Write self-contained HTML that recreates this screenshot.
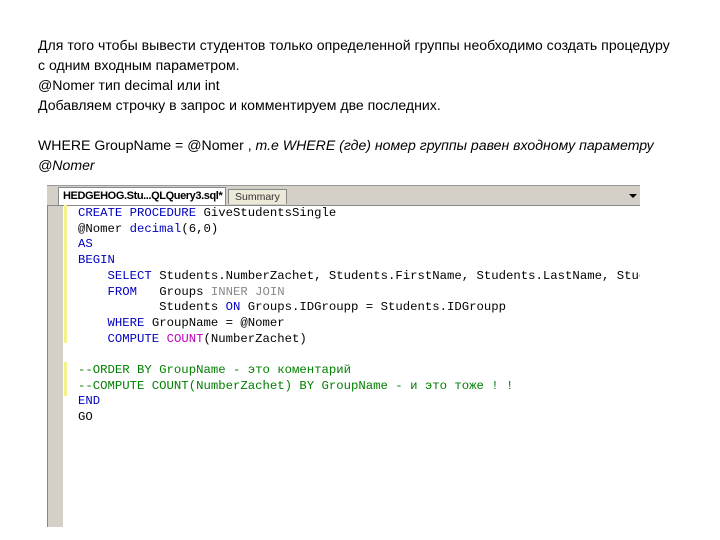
<!DOCTYPE html>
<html><head><meta charset="utf-8"><style>
body{margin:0;width:720px;height:540px;background:#fff;position:relative;overflow:hidden;font-family:"Liberation Sans",sans-serif}
.t{position:absolute;left:38px;font-size:14.1px;color:#000;white-space:nowrap;line-height:16px}
.frame{position:absolute;left:47px;top:185px;width:593px;height:342px;background:#fff}
.gray{position:absolute;left:47px;top:185px;width:15px;height:342px;background:#d4d0c8;border-left:1px solid #888}
.yel{position:absolute;left:64px;top:205px;width:3px;height:138px;background:#f4f28a}
.yel2{position:absolute;left:64px;top:362px;width:3px;height:34px;background:#f4f28a}
.tabbar{position:absolute;left:47px;top:185px;width:593px;height:19px;background:#d4d0c8;border-top:1px solid #999;border-bottom:1px solid #888}
.tab1{position:absolute;left:58px;top:187px;width:158px;height:17px;padding:0 4px;background:#fff;font-size:11px;letter-spacing:-0.4px;font-weight:bold;line-height:17px;border:1px solid #888;border-bottom:none;white-space:nowrap;overflow:hidden}
.tab2{position:absolute;left:228px;top:189px;height:14px;padding:0 6px;background:#ece9d8;font-size:10.5px;line-height:14px;border:1px solid #888;border-bottom:none;color:#333}
.arr{position:absolute;left:629px;top:194px;width:0;height:0;border-left:4px solid transparent;border-right:4px solid transparent;border-top:4px solid #000}
.code{position:absolute;left:78px;top:206px;font-family:"Liberation Mono",monospace;font-size:12.3px;line-height:15.7px;white-space:pre;color:#000;width:562px;overflow:hidden}
.k{color:#0000c0}.p{color:#c000c0}.g{color:#888}.c{color:#008000}
</style></head><body>
<div class="t" style="top:37px">Для того чтобы вывести студентов только определенной группы необходимо создать процедуру</div>
<div class="t" style="top:57px">с одним входным параметром.</div>
<div class="t" style="top:77px">@Nomer тип decimal или int</div>
<div class="t" style="top:97px">Добавляем строчку в запрос и комментируем две последних.</div>
<div class="t" style="top:137px">WHERE GroupName = @Nomer , <i>т.е WHERE (где) номер группы равен входному параметру</i></div>
<div class="t" style="top:157px"><i>@Nomer</i></div>
<div class="frame"></div>
<div class="gray"></div>
<div class="tabbar"></div>
<div class="tab1">HEDGEHOG.Stu...QLQuery3.sql*</div>
<div class="tab2">Summary</div>
<div class="arr"></div>
<div class="yel"></div><div class="yel2"></div>
<div class="code"><span class="k">CREATE PROCEDURE</span> GiveStudentsSingle
@Nomer <span class="k">decimal</span>(6,0)
<span class="k">AS</span>
<span class="k">BEGIN</span>
    <span class="k">SELECT</span> Students.NumberZachet, Students.FirstName, Students.LastName, Students
    <span class="k">FROM</span>   Groups <span class="g">INNER JOIN</span>
           Students <span class="k">ON</span> Groups.IDGroupp = Students.IDGroupp
    <span class="k">WHERE</span> GroupName = @Nomer
    <span class="k">COMPUTE</span> <span class="p">COUNT</span>(NumberZachet)

<span class="c">--ORDER BY GroupName - это коментарий</span>
<span class="c">--COMPUTE COUNT(NumberZachet) BY GroupName - и это тоже ! !</span>
<span class="k">END</span>
GO</div>
</body></html>
